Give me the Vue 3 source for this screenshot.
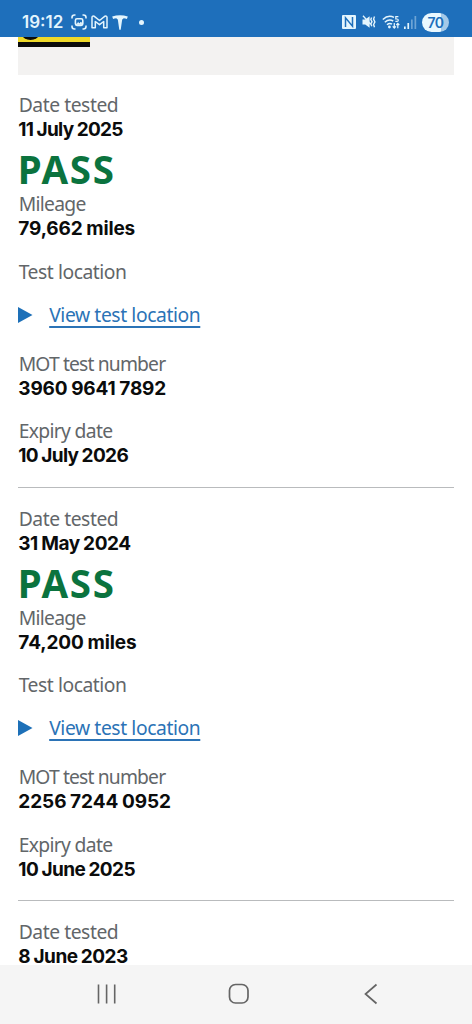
<script setup>
const tests = [
  {
    date: '11 July 2025', dateFit: -0.67,
    mileage: '79,662 miles', mileageFit: -0.14,
    number: '3960 9641 7892', numberFit: -0.14,
    expiry: '10 July 2026', expiryFit: -0.63,
  },
  {
    date: '31 May 2024', dateFit: -0.44,
    mileage: '74,200 miles', mileageFit: -0.11,
    number: '2256 7244 0952', numberFit: -0.08,
    expiry: '10 June 2025', expiryFit: -0.57,
  },
]
const fit = (n) => ({ letterSpacing: n + 'px' })
</script>

<template>
  <div class="phone">
    <header class="status">
      <span class="clock">19:12</span>
      <svg class="capture" width="16" height="16" viewBox="0 0 16 16" fill="none" stroke="#e4f5fd" stroke-width="1.6">
        <path d="M1 4.5V3.5Q1 1 3.5 1H4.5M11.5 1H12.5Q15 1 15 3.5V4.5M15 11.5V12.5Q15 15 12.5 15H11.5M4.5 15H3.5Q1 15 1 12.5V11.5" />
        <rect x="4.4" y="4.8" width="7.4" height="6.6" rx="1.6" />
        <path d="M5 10.5L7.2 8.5L8.5 9.5L10 8L11.5 10.5Z" fill="#e4f5fd" stroke-width=".6" />
      </svg>
      <svg class="mail" width="17" height="14" viewBox="0 0 17 14" fill="none" stroke="#e4f5fd" stroke-width="1.5" stroke-linejoin="round">
        <path d="M1 12.8V2.6Q1 .6 3 1.2L8.5 5.5L14 1.2Q16 .6 16 2.6V12.8H12.7V6.5L8.5 9.7L4.3 6.5V12.8Z" />
      </svg>
      <svg class="tesla" width="16" height="15" viewBox="0 0 16 15" fill="#e4f5fd">
        <path d="M.2 1.6Q8-1 15.8 1.6L14.9 4.1Q13.5 3.3 11.7 3.2Q10.8 4.3 10.2 4.4L8.7 14.8H7.3L5.8 4.4Q5.2 4.3 4.3 3.2Q2.5 3.3 1.1 4.1Z" />
      </svg>
      <i class="more"></i>
      <svg class="nfc" width="14" height="14" viewBox="0 0 14 14">
        <rect width="14" height="14" rx="1" fill="#e4f5fd" />
        <path d="M3.5 12V2.8L10.5 11.2V2" fill="none" stroke="#1e6fbb" stroke-width="1.5" />
      </svg>
      <svg class="mute" width="14" height="14" viewBox="0 0 14 14" fill="none" stroke="#e4f5fd">
        <path d="M.5 4.6H3.2L7.6 1.3V12.7L3.2 9.4H.5Z" fill="#e4f5fd" stroke="none" />
        <path d="M9.6 2.4L8.8 4.5L10 6.7L8.8 8.8L9.8 11.2M12.5 1.5L11.6 4.1L12.9 6.9L11.6 9.5L12.5 12.3" stroke-width="1.4" />
        <path d="M1 .8L8.6 9.3" stroke-width="1.3" />
      </svg>
      <svg class="wifi" width="18" height="15" viewBox="0 0 18 15" fill="none" stroke="#e4f5fd" stroke-width="1.5">
        <path d="M.8 4.5Q6.2-.5 12 2.4M2.8 7.2Q7 3.5 11.2 6M5 9.7Q7.5 7.5 10 9.2" />
        <circle cx="7.4" cy="12" r="1.4" fill="#e4f5fd" stroke="none" />
        <path d="M16.4 1.7H13.8V4H15Q16.3 4 16.3 5.2T15 6.4H13.4" stroke-width="1.2" />
        <path d="M12.3 8V13M10.7 11.3L12.3 13L13.9 11.3M15.8 13.2V8.5M14.3 10L15.8 8.4L17.3 10" stroke-width="1.2" />
      </svg>
      <svg class="signal" width="13" height="13" viewBox="0 0 13 13" fill="#e4f5fd">
        <rect x="0" y="10.5" width="1.7" height="2.5" />
        <rect x="3.4" y="7" width="1.7" height="6" />
        <rect x="7" y="3.5" width="1.7" height="9.5" opacity=".4" />
        <rect x="10.5" y="0" width="1.7" height="13" opacity=".4" />
      </svg>
      <span class="battery">70</span>
    </header>

    <main class="page">
      <div class="panel">
        <div class="plate"><span class="plate-yellow"><i></i></span></div>
      </div>

      <section v-for="t in tests" :key="t.number" class="test">
        <p class="label date-label">Date tested</p>
        <p class="value" :style="fit(t.dateFit)">{{ t.date }}</p>
        <p class="result">PASS</p>
        <p class="label mileage-label">Mileage</p>
        <p class="value" :style="fit(t.mileageFit)">{{ t.mileage }}</p>
        <p class="label location-label">Test location</p>
        <div class="details">
          <svg width="15" height="16" viewBox="0 0 15 16"><path d="M0 0L14.5 8L0 16Z" fill="#1d70b8" /></svg>
          <a class="link">View test location</a>
        </div>
        <p class="label number-label">MOT test number</p>
        <p class="value" :style="fit(t.numberFit)">{{ t.number }}</p>
        <p class="label expiry-label">Expiry date</p>
        <p class="value" :style="fit(t.expiryFit)">{{ t.expiry }}</p>
      </section>
      <section class="test last">
        <p class="label date-label">Date tested</p>
        <p class="value" :style="fit(-0.5)">8 June 2023</p>
      </section>
    </main>

    <nav class="nav">
      <svg width="20" height="20" viewBox="0 0 20 20" fill="none" stroke="#656565" stroke-width="1.6"><path d="M1.5 .5V19.5M9.6 .5V19.5M17.7 .5V19.5" /></svg>
      <svg class="home" width="22" height="22" viewBox="0 0 22 22" fill="none" stroke="#656565" stroke-width="1.7"><rect x="1.5" y="1.5" width="18.5" height="18.5" rx="6" /></svg>
      <svg width="14" height="22" viewBox="0 0 14 22" fill="none" stroke="#656565" stroke-width="1.7"><path d="M12.5 1.5L1.5 11L12.5 20.5" /></svg>
    </nav>
  </div>
</template>

<style>
body { margin: 0; background: #fff; }
</style>

<style scoped>
.phone { width: 472px; height: 1024px; display: flex; flex-direction: column; overflow: hidden; background: #fff; }
.status { height: 37px; flex: none; box-sizing: border-box; padding: 7px 23px 0 22px; display: flex; align-items: center; background: #1e6fbb; color: #e4f5fd; }
.status svg { flex: none; }
.clock { width: 49px; font: 600 17px/22px Inter, sans-serif; }
.mail { margin-left: 4px; }
.tesla { margin-left: 4px; }
.more { width: 5px; height: 5px; margin-left: 11px; border-radius: 50%; background: #e4f5fd; }
.nfc { margin-left: auto; }
.mute { margin-left: 6px; }
.wifi { margin-left: 6px; }
.signal { margin-left: 4px; }
.battery { width: 27px; height: 19px; margin-left: 5px; border-radius: 10px; background: linear-gradient(90deg, #e9f8ff 70%, #a5c9e8 70%); color: #1e6fbb; font: 600 14px/19px Inter, sans-serif; letter-spacing: -.6px; text-align: center; }
.page { flex: 1; min-height: 0; overflow: hidden; padding: 0 18px; }
.panel { height: 38px; background: #f3f2f1; }
.plate { width: 72px; height: 10px; background: #0b0c0c; display: flex; }
.plate-yellow { width: 72px; height: 5px; background: #eed92a; overflow: hidden; }
.plate-yellow i { display: block; width: 17px; height: 12px; margin: -9px 0 0 4px; border-radius: 50%; background: #0b0c0c; }
p { margin: 0; }
.test { height: 412.5px; border-bottom: 1px solid #b9bbbd; white-space: nowrap; }
.test:nth-of-type(1) { height: 411.5px; }
.label { padding-left: .7px; font: 400 19.3px/24.5px "Noto Sans", sans-serif; color: #626669; letter-spacing: -.45px; }
.value { box-sizing: border-box; height: 24.5px; padding: .8px 0 0 .3px; font: 700 19px/24.5px Inter, sans-serif; color: #0b0c0c; word-spacing: -.7px; }
.result { box-sizing: border-box; height: 50px; padding-top: 3.2px; font: 700 38.5px/49px "Noto Sans", sans-serif; color: #0b733e; margin-left: -.2px; letter-spacing: 1.7px; }
.date-label { padding-top: 19px; }
.test:nth-of-type(1) .date-label { padding-top: 18.2px; }
.mileage-label { letter-spacing: -.7px; }
.location-label { padding-top: 18.5px; }
.details { display: flex; align-items: center; margin-top: 18.5px; height: 24.5px; }
.link { margin-left: 16.2px; font: 400 19.3px/24.5px "Noto Sans", sans-serif; letter-spacing: -.41px; color: #2b73b6; text-decoration: underline; text-decoration-thickness: 1.5px; text-underline-offset: 4px; }
.number-label { padding-top: 24.5px; letter-spacing: -.85px; }
.expiry-label { padding-top: 18.5px; letter-spacing: -.67px; }
.last { border: 0; }
.nav { height: 59px; flex: none; box-sizing: border-box; display: flex; align-items: center; justify-content: space-between; padding: 0 94px 1.5px 97px; background: #f5f5f5; }
.home { margin-right: 4px; }
</style>
